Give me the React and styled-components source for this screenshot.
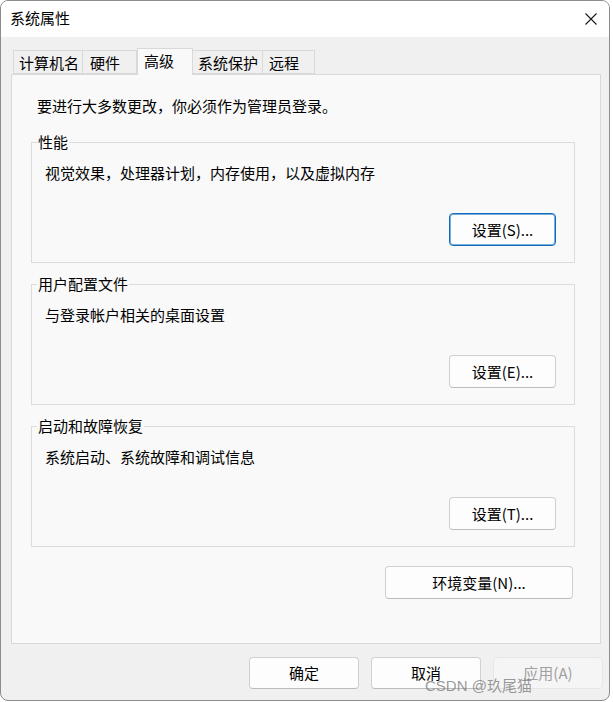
import React from "react";
import styled, { createGlobalStyle } from "styled-components";

const Global = createGlobalStyle`
  html, body { margin: 0; padding: 0; background: #ffffff; }
  body { font-family: "Noto Sans CJK SC", "Noto Sans", sans-serif; font-size: 15px; color: #000; }
  * { box-sizing: border-box; }
`;

const Window = styled.div`
  position: relative;
  width: 610px;
  height: 701px;
  border: 1px solid #8c8c8c;
  border-radius: 8px;
  overflow: hidden;
  display: flex;
  flex-direction: column;
  background: #f0f0f0;
`;

const TitleBar = styled.div`
  height: 36px;
  flex: none;
  background: #ffffff;
  display: flex;
  align-items: center;
  justify-content: space-between;
  padding: 0 12px 2px 9px;
  font-size: 15px;
  line-height: 20px;
`;

const CloseButton = styled.div`
  width: 12px;
  height: 12px;
  display: flex;
  margin-top: 2px;
`;

const Body = styled.div`
  flex: 1;
  display: flex;
  flex-direction: column;
  padding: 11px 8px 0 10px;
`;

const TabRow = styled.div`
  display: flex;
  align-items: flex-end;
  height: 26px;
  padding-left: 2px;
  position: relative;
  z-index: 1;
`;

const Tab = styled.div`
  width: ${(p) => p.$w}px;
  height: ${(p) => (p.$active ? 27 : 24)}px;
  margin-bottom: ${(p) => (p.$active ? -1 : 0)}px;
  background: ${(p) => (p.$active ? "#f9f9f9" : "#f0f0f0")};
  border: 1px solid #d9d9d9;
  border-bottom: ${(p) => (p.$active ? "none" : "1px solid #d9d9d9")};
  border-left: ${(p) => (p.$first || p.$active ? "1px solid #d9d9d9" : "none")};
  padding-left: ${(p) => p.$pl}px;
  font-size: 15px;
  line-height: ${(p) => (p.$active ? 24 : 23)}px;
  white-space: nowrap;
`;

const Panel = styled.div`
  height: 570px;
  background: #f9f9f9;
  border: 1px solid #d9d9d9;
  display: flex;
  flex-direction: column;
  padding: 21px 0 0 19px;
`;

const Notice = styled.div`
  margin-left: 6px;
  line-height: 20px;
`;

const Group = styled.fieldset`
  margin: ${(p) => p.$mt}px 25px 0 0;
  border: 1px solid #dcdcdc;
  padding: 11px 18px 16px 5px;
  display: flex;
  flex-direction: column;
  min-width: 0;
`;

const Legend = styled.legend`
  padding: 0 1px;
  line-height: 20px;
  font-size: 15px;
`;

const GroupText = styled.div`
  margin-left: 8px;
  line-height: 20px;
`;

const Button = styled.button`
  font-family: "Noto Sans CJK SC", "Noto Sans", sans-serif;
  font-size: 15px;
  line-height: 20px;
  width: ${(p) => p.$w}px;
  height: 33px;
  padding: 0;
  border-radius: 4px;
  background: ${(p) => (p.$disabled ? "#f5f5f5" : "#fdfdfd")};
  color: ${(p) => (p.$disabled ? "#a0a0a0" : "#000")};
  border: 1px solid ${(p) => (p.$default ? "#0f6cbd" : p.$disabled ? "#e6e6e6" : "#d0d0d0")};
  border-bottom-color: ${(p) => (p.$default ? "#0f6cbd" : p.$disabled ? "#e6e6e6" : "#bcbcbc")};
  box-shadow: ${(p) => (p.$default ? "inset 0 0 0 1px rgba(15,108,189,0.55)" : "none")};
  display: flex;
  align-items: center;
  justify-content: center;
  cursor: default;
`;

const GroupButton = styled(Button)`
  align-self: flex-end;
  margin-top: 30px;
`;

const EnvButton = styled(Button)`
  align-self: flex-end;
  margin: 19px 27px 0 0;
`;

const Footer = styled.div`
  display: flex;
  justify-content: flex-end;
  gap: 12px;
  padding: 13px 0 0 0;
  margin-right: -2px;
`;

const FooterButton = styled(Button)`
  height: 32px;
`;

const Watermark = styled.div`
  position: absolute;
  left: 424px;
  top: 675px;
  font-family: "Liberation Sans", "Noto Sans CJK SC", sans-serif;
  font-size: 15px;
  line-height: 20px;
  color: rgba(120, 120, 120, 0.75);
  pointer-events: none;
  white-space: nowrap;
`;

const tabs = [
  { label: "计算机名", w: 70, pl: 5 },
  { label: "硬件", w: 54, pl: 7 },
  { label: "高级", w: 56, pl: 6, active: true },
  { label: "系统保护", w: 70, pl: 5 },
  { label: "远程", w: 52, pl: 6 },
];

const groups = [
  { title: "性能", text: "视觉效果，处理器计划，内存使用，以及虚拟内存", btn: "设置(S)...", def: true, mt: 16 },
  { title: "用户配置文件", text: "与登录帐户相关的桌面设置", btn: "设置(E)...", mt: 11 },
  { title: "启动和故障恢复", text: "系统启动、系统故障和调试信息", btn: "设置(T)...", mt: 11 },
];

export default function App() {
  return (
    <>
      <Global />
      <Window>
        <TitleBar>
          <span>系统属性</span>
          <CloseButton>
            <svg width="12" height="12" viewBox="0 0 12 12">
              <path d="M0.5 0.5 L11.5 11.5 M11.5 0.5 L0.5 11.5" stroke="#1a1a1a" strokeWidth="1.1" fill="none" />
            </svg>
          </CloseButton>
        </TitleBar>
        <Body>
          <TabRow>
            {tabs.map((t, i) => (
              <Tab key={t.label} $w={t.w} $pl={t.pl} $active={t.active} $first={i === 0}>
                {t.label}
              </Tab>
            ))}
          </TabRow>
          <Panel>
            <Notice>要进行大多数更改，你必须作为管理员登录。</Notice>
            {groups.map((g) => (
              <Group key={g.title} $mt={g.mt}>
                <Legend>{g.title}</Legend>
                <GroupText>{g.text}</GroupText>
                <GroupButton $w={107} $default={g.def}>{g.btn}</GroupButton>
              </Group>
            ))}
            <EnvButton $w={188}>环境变量(N)...</EnvButton>
          </Panel>
          <Footer>
            <FooterButton $w={110}>确定</FooterButton>
            <FooterButton $w={110}>取消</FooterButton>
            <FooterButton $w={110} $disabled>应用(A)</FooterButton>
          </Footer>
        </Body>
        <Watermark>CSDN @玖尾猫</Watermark>
      </Window>
    </>
  );
}
